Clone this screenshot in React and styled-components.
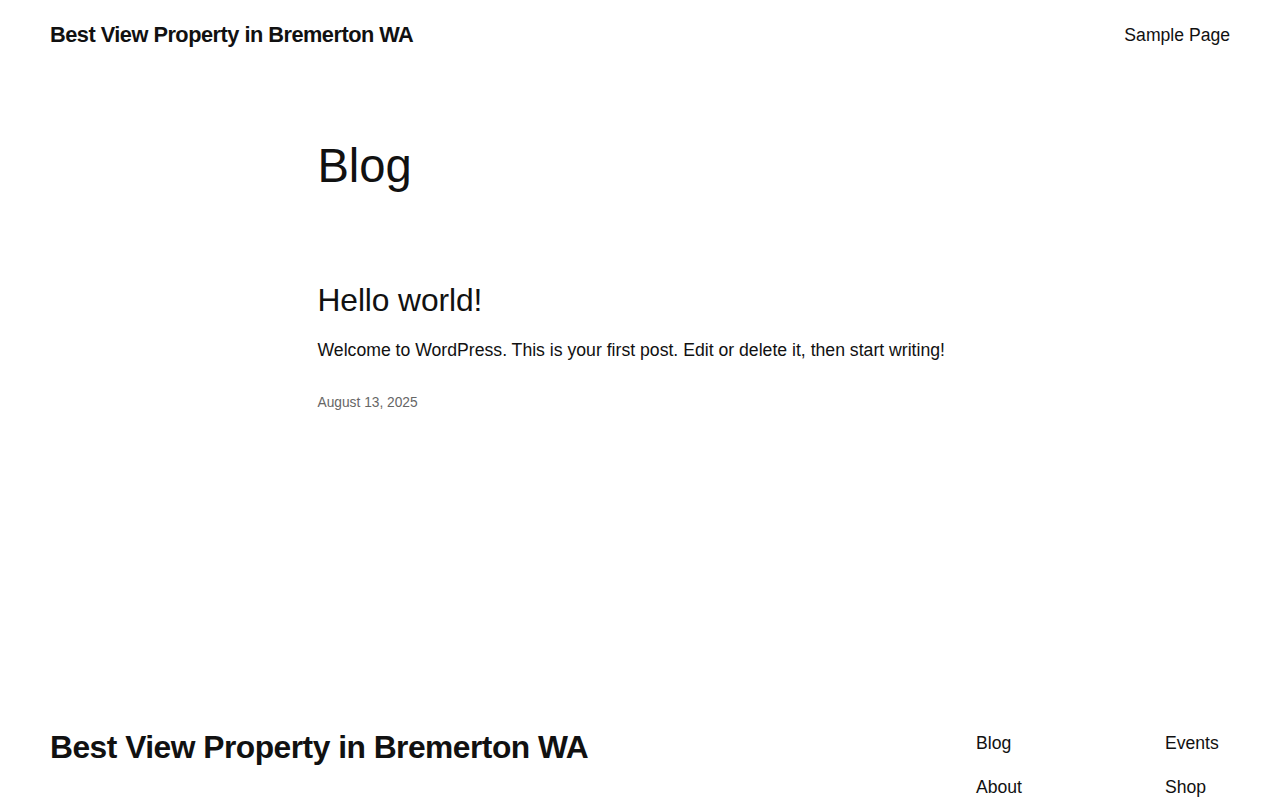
import React from "react";
import styled, { createGlobalStyle } from "styled-components";

const GlobalStyle = createGlobalStyle`
  html, body {
    margin: 0;
    padding: 0;
    background: #fff;
  }
  body {
    font-family: "Liberation Sans", Arial, sans-serif;
    color: #111111;
    -webkit-font-smoothing: antialiased;
  }
  a {
    color: inherit;
    text-decoration: none;
  }
`;

const Page = styled.div`
  min-height: 100vh;
  display: flex;
  flex-direction: column;
  box-sizing: border-box;
  padding: 0 50px;
`;

const Header = styled.header`
  height: 70px;
  display: flex;
  align-items: center;
  justify-content: space-between;
`;

const SiteTitle = styled.a`
  font-weight: 700;
  font-size: ${(p) => (p.$big ? "31.76px" : "21.76px")};
  letter-spacing: -0.5px;
  line-height: 1.2;
`;

const NavLink = styled.a`
  font-size: 17.6px;
  line-height: 1.4;
`;

const Main = styled.main`
  flex: 1;
  width: 645px;
  margin: 0 auto;
  padding-top: 68px;
`;

const PageTitle = styled.h1`
  margin: 0;
  font-size: 47.2px;
  font-weight: 400;
  line-height: 1.2;
  letter-spacing: -0.1px;
`;

const Post = styled.article`
  margin-top: 86px;
`;

const PostTitle = styled.h2`
  margin: 0;
  font-size: 31.76px;
  font-weight: 400;
  line-height: 1.2;
  letter-spacing: -0.1px;
`;

const Excerpt = styled.p`
  margin: 19px 0 0;
  font-size: 17.65px;
  line-height: 1.4;
`;

const PostDate = styled.time`
  display: block;
  margin-top: 31px;
  font-size: 13.75px;
  line-height: 1.4;
  color: #666666;
`;

const Footer = styled.footer`
  display: flex;
  justify-content: space-between;
  align-items: flex-start;
`;

const FooterNav = styled.nav`
  display: grid;
  grid-template-columns: 189px 65px;
  margin-top: 3px;
`;

const NavColumn = styled.div`
  display: flex;
  flex-direction: column;
  gap: 19.4px;
`;

const columns = [
  ["Blog", "About"],
  ["Events", "Shop"],
];

export default function App() {
  return (
    <>
      <GlobalStyle />
      <Page>
        <Header>
          <SiteTitle href="#">Best View Property in Bremerton WA</SiteTitle>
          <NavLink href="#">Sample Page</NavLink>
        </Header>

        <Main>
          <PageTitle>Blog</PageTitle>
          <Post>
            <PostTitle>Hello world!</PostTitle>
            <Excerpt>
              Welcome to WordPress. This is your first post. Edit or delete it,
              then start writing!
            </Excerpt>
            <PostDate>August 13, 2025</PostDate>
          </Post>
        </Main>

        <Footer>
          <SiteTitle $big href="#">
            Best View Property in Bremerton WA
          </SiteTitle>
          <FooterNav>
            {columns.map((col, i) => (
              <NavColumn key={i}>
                {col.map((item) => (
                  <NavLink key={item} href="#">
                    {item}
                  </NavLink>
                ))}
              </NavColumn>
            ))}
          </FooterNav>
        </Footer>
      </Page>
    </>
  );
}
